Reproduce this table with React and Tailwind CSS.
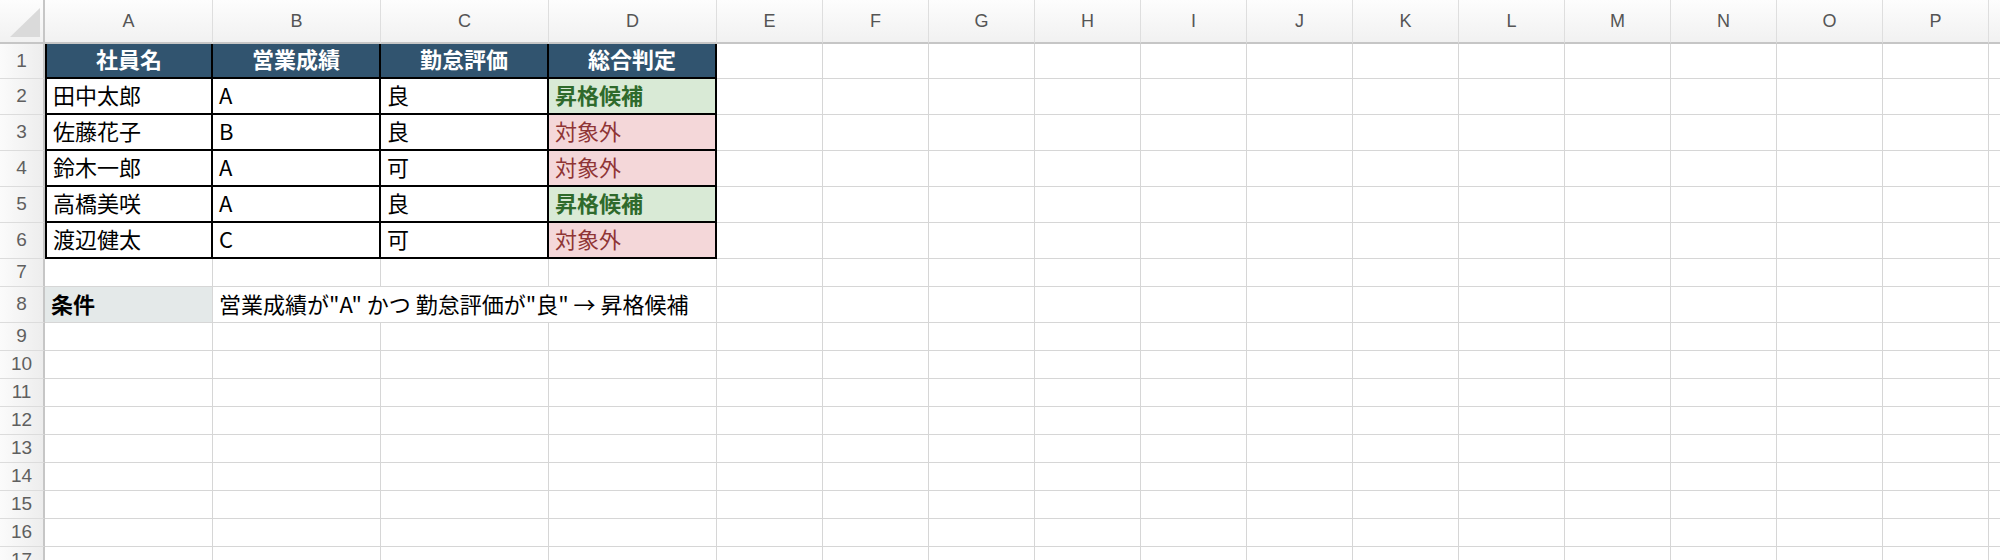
import React from "react";

const COLS = ["A", "B", "C", "D", "E", "F", "G", "H", "I", "J", "K", "L", "M", "N", "O", "P", "Q"];

const rows = [
  { name: "田中太郎", sales: "A", attendance: "良", result: "昇格候補", ok: true },
  { name: "佐藤花子", sales: "B", attendance: "良", result: "対象外", ok: false },
  { name: "鈴木一郎", sales: "A", attendance: "可", result: "対象外", ok: false },
  { name: "高橋美咲", sales: "A", attendance: "良", result: "昇格候補", ok: true },
  { name: "渡辺健太", sales: "C", attendance: "可", result: "対象外", ok: false },
];

function RowHead({ n, h }) {
  return (
    <div
      className={`${h} flex items-center justify-center border-r-2 border-b border-r-[#c6c6c6] border-b-[#dcdcdc] bg-gradient-to-r from-[#fbfbfb] to-[#ededed] text-[19px] text-[#5f5f5f] font-['Liberation_Sans',Arial,sans-serif]`}
    >
      {n}
    </div>
  );
}

function Blank({ h }) {
  return <div className={`${h} border-r border-b border-[#d6d6d6]`} />;
}

function Blanks({ h, from }) {
  return COLS.slice(from).map((c) => <Blank key={c} h={h} />);
}

export default function App() {
  const emptyRows = [9, 10, 11, 12, 13, 14, 15, 16, 17];

  return (
    <div className="w-[2000px] h-[560px] overflow-hidden bg-white font-['Noto_Sans_CJK_JP','Noto_Sans',sans-serif]">
      <div className="grid grid-cols-[45px_168px_168px_168px_168px_repeat(13,106px)]">
        {/* column header */}
        <div className="h-[44px] relative border-r-2 border-b-2 border-[#c6c6c6] bg-gradient-to-b from-[#fdfdfd] to-[#f1f1f1]">
          <svg className="absolute left-0 top-0" width="43" height="42">
            <polygon points="10,37 40,37 40,8" fill="#dadada" />
          </svg>
        </div>
        {COLS.map((c) => (
          <div
            key={c}
            className="h-[44px] flex items-center justify-center border-r border-r-[#dedede] border-b-2 border-b-[#c6c6c6] bg-gradient-to-b from-[#fdfdfd] to-[#f1f1f1] text-[18px] text-[#555] font-['Liberation_Sans',Arial,sans-serif]"
          >
            {c}
          </div>
        ))}

        {/* row 1: table header */}
        <RowHead n={1} h="h-[35px]" />
        {["社員名", "営業成績", "勤怠評価", "総合判定"].map((t, i) => (
          <div
            key={t}
            className={`h-[35px] flex items-end justify-center pb-[2px] bg-[#31546f] border-black border-r-2 border-b-2 ${i === 0 ? "border-l-2" : ""} text-white font-bold text-[22px]`}
          >
            {t}
          </div>
        ))}
        <Blanks h="h-[35px]" from={4} />

        {/* rows 2-6 */}
        {rows.map((r, i) => (
          <React.Fragment key={r.name}>
            <RowHead n={i + 2} h="h-[36px]" />
            <div className="h-[36px] flex items-end pl-[6px] pb-[2px] border-black border-l-2 border-r-2 border-b-2 text-[22px] text-black">
              {r.name}
            </div>
            <div className="h-[36px] flex items-end pl-[6px] pb-[2px] border-black border-r-2 border-b-2 text-[22px] text-black">
              {r.sales}
            </div>
            <div className="h-[36px] flex items-end pl-[6px] pb-[2px] border-black border-r-2 border-b-2 text-[22px] text-black">
              {r.attendance}
            </div>
            {r.ok ? (
              <div className="h-[36px] flex items-end pl-[6px] pb-[2px] border-black border-r-2 border-b-2 bg-[#d9ead6] text-[#2f6a2c] font-bold text-[22px]">
                {r.result}
              </div>
            ) : (
              <div className="h-[36px] flex items-end pl-[6px] pb-[2px] border-black border-r-2 border-b-2 bg-[#f4d7d9] text-[#8f3535] text-[22px]">
                {r.result}
              </div>
            )}
            <Blanks h="h-[36px]" from={4} />
          </React.Fragment>
        ))}

        {/* row 7 */}
        <RowHead n={7} h="h-[28px]" />
        <Blanks h="h-[28px]" from={0} />

        {/* row 8: condition */}
        <RowHead n={8} h="h-[36px]" />
        <div className="h-[36px] flex items-end pl-[6px] pb-[2px] border-r border-b border-[#d6d6d6] bg-[#e4e9e9] font-bold text-[22px] text-black">
          条件
        </div>
        <div className="col-span-3 h-[36px] flex items-end pl-[6px] pb-[2px] border-r border-b border-[#d6d6d6] whitespace-nowrap text-[22px] text-black">
          営業成績が"A" かつ 勤怠評価が"良" → 昇格候補
        </div>
        <Blanks h="h-[36px]" from={4} />

        {/* rows 9+ */}
        {emptyRows.map((n) => (
          <React.Fragment key={n}>
            <RowHead n={n} h="h-[28px]" />
            <Blanks h="h-[28px]" from={0} />
          </React.Fragment>
        ))}
      </div>
    </div>
  );
}
